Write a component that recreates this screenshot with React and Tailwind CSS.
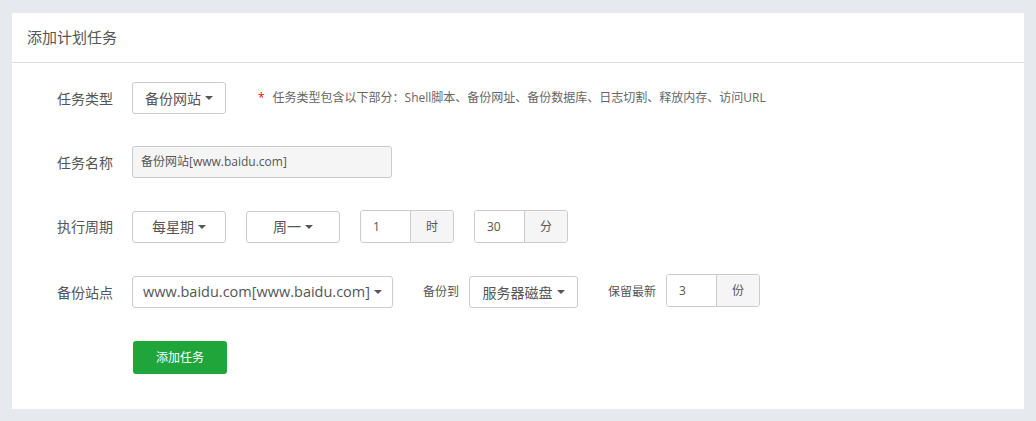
import React from "react";

const font = { fontFamily: '"Open Sans", "Noto Sans CJK SC", sans-serif' };

function Caret() {
  return <span className="ml-[4px] inline-block h-0 w-0 border-x-[4px] border-t-[4px] border-x-transparent border-t-[#555] align-middle" />;
}

function SelectBtn({ children, w, text = "text-[14px]" }) {
  return (
    <div className={`flex h-[32px] items-center justify-center rounded-[3px] border border-[#ccc] bg-white ${text} text-[#555] ${w}`}>
      <span>{children}</span>
      <Caret />
    </div>
  );
}

function Group({ value, unit }) {
  return (
    <div className="flex h-[33px] w-[94px] overflow-hidden rounded-[3px] border border-[#ccc] text-[12px] text-[#555]">
      <div className="flex w-[49px] items-center bg-white pl-[12px]">{value}</div>
      <div className="flex flex-1 items-center justify-center border-l border-[#ccc] bg-[#f5f5f5]">{unit}</div>
    </div>
  );
}

function Row({ label, children, mt }) {
  return (
    <div className={`flex items-center ${mt}`}>
      <div className="w-[120px] pl-[45px] text-[14px] text-[#555]">{label}</div>
      {children}
    </div>
  );
}

export default function App() {
  return (
    <div className="min-h-[421px] w-[1036px] bg-[#e6e9ed] pl-[12px] pr-[12px] pt-[13px]" style={font}>
      <div className="h-[396px] bg-white">
        <div className="flex h-[50px] items-center border-b border-[#ddd] pl-[15px] text-[15px] text-[#555]">添加计划任务</div>
        <div className="pt-[19px]">
          <Row label="任务类型">
            <SelectBtn w="w-[94px]">备份网站</SelectBtn>
            <div className="ml-[32px] flex items-center text-[12px] text-[#666]">
              <span className="mr-[8px] text-[#ef0808]">*</span>
              任务类型包含以下部分：Shell脚本、备份网址、备份数据库、日志切割、释放内存、访问URL
            </div>
          </Row>
          <Row label="任务名称" mt="mt-[32px]">
            <div className="flex h-[32px] w-[260px] items-center rounded-[3px] border border-[#ccc] bg-[#f5f5f5] pl-[8px] text-[12px] text-[#555]">
              备份网站[www.baidu.com]
            </div>
          </Row>
          <Row label="执行周期" mt="mt-[32px]">
            <div className="flex items-center gap-[20px]">
              <SelectBtn w="w-[94px]">每星期</SelectBtn>
              <SelectBtn w="w-[94px]">周一</SelectBtn>
              <Group value="1" unit="时" />
              <Group value="30" unit="分" />
            </div>
          </Row>
          <Row label="备份站点" mt="mt-[33px]">
            <div className="flex items-center">
              <SelectBtn w="w-[261px]" text="text-[14.5px]">www.baidu.com[www.baidu.com]</SelectBtn>
              <span className="ml-[30px] mr-[10px] text-[12px] text-[#555]">备份到</span>
              <SelectBtn w="w-[109px]">服务器磁盘</SelectBtn>
              <span className="ml-[30px] mr-[10px] text-[12px] text-[#555]">保留最新</span>
              <div className="-mt-[3px]">
                <Group value="3" unit="份" />
              </div>
            </div>
          </Row>
          <div className="mt-[33px] pl-[121px]">
            <div className="flex h-[33px] w-[94px] items-center justify-center rounded-[3px] bg-[#20a53a] text-[12px] text-white">添加任务</div>
          </div>
        </div>
      </div>
    </div>
  );
}
